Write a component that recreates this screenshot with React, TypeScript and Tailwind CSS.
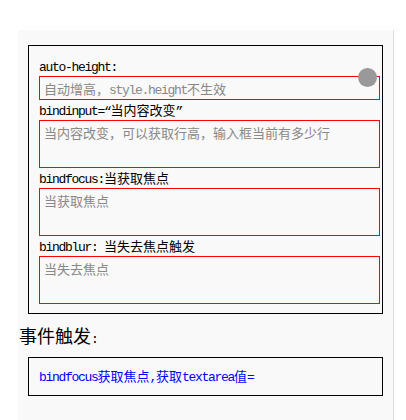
import type { ReactNode } from 'react';

// 西文部分用等宽字体，模拟半角宽度
const L = ({ children }: { children: ReactNode }) => (
  <span className="font-[family-name:'Liberation_Mono',monospace] text-[13px] tracking-[-1.3px]">
    {children}
  </span>
);

const Label = ({ children }: { children: ReactNode }) => (
  <div className="h-[20px] leading-[20px] text-[13px] text-black whitespace-pre">{children}</div>
);

const Area = ({ h, children }: { h: string; children: ReactNode }) => (
  <div className={`w-[341px] ${h} border border-[#ff0000] pl-[4px] pt-[3px] leading-[17px] text-[13px] text-[#888]`}>
    {children}
  </div>
);

export default function App() {
  return (
    <div className="w-[406px] h-[420px] bg-white pt-[30px] pl-[18px] font-[family-name:'Noto_Sans_CJK_SC',sans-serif]">
      <div className="w-[376px] h-[390px] bg-[#f9f9f9] border-r border-[#dddddd]">
        <div className="pt-[15px] pl-[10px]">
          <div className="relative w-[355px] border border-black pt-[10px] pl-[10px] pb-[9px]">
            <Label>
              <L>auto-height:</L>
            </Label>
            <Area h="h-[24px]">
              自动增高，<L>style.height</L>不生效
            </Area>
            <Label>
              <L>bindinput=“</L>当内容改变<L>”</L>
            </Label>
            <Area h="h-[48px]">当内容改变，可以获取行高，输入框当前有多少行</Area>
            <Label>
              <L>bindfocus:</L>当获取焦点
            </Label>
            <Area h="h-[48px]">当获取焦点</Area>
            <Label>
              <L>bindblur: </L>当失去焦点触发
            </Label>
            <Area h="h-[48px]">当失去焦点</Area>

            {/* 悬浮的灰色圆点 */}
            <div className="absolute left-[329px] top-[22px] w-[19px] h-[19px] rounded-full bg-[#999999]" />
          </div>
        </div>

        <div className="mt-[8px] pl-[1px] h-[26px] leading-[26px] text-[18px] text-black">
          事件触发<L>:</L>
        </div>

        <div className="mt-[9px] ml-[10px] w-[355px] border border-black pl-[10px] py-[10px] leading-[15px] text-[13px] text-[#0000ff]">
          <L>bindfocus</L>获取焦点<L>,</L>获取<L>textarea</L>值<L>=</L>
        </div>
      </div>
    </div>
  );
}
